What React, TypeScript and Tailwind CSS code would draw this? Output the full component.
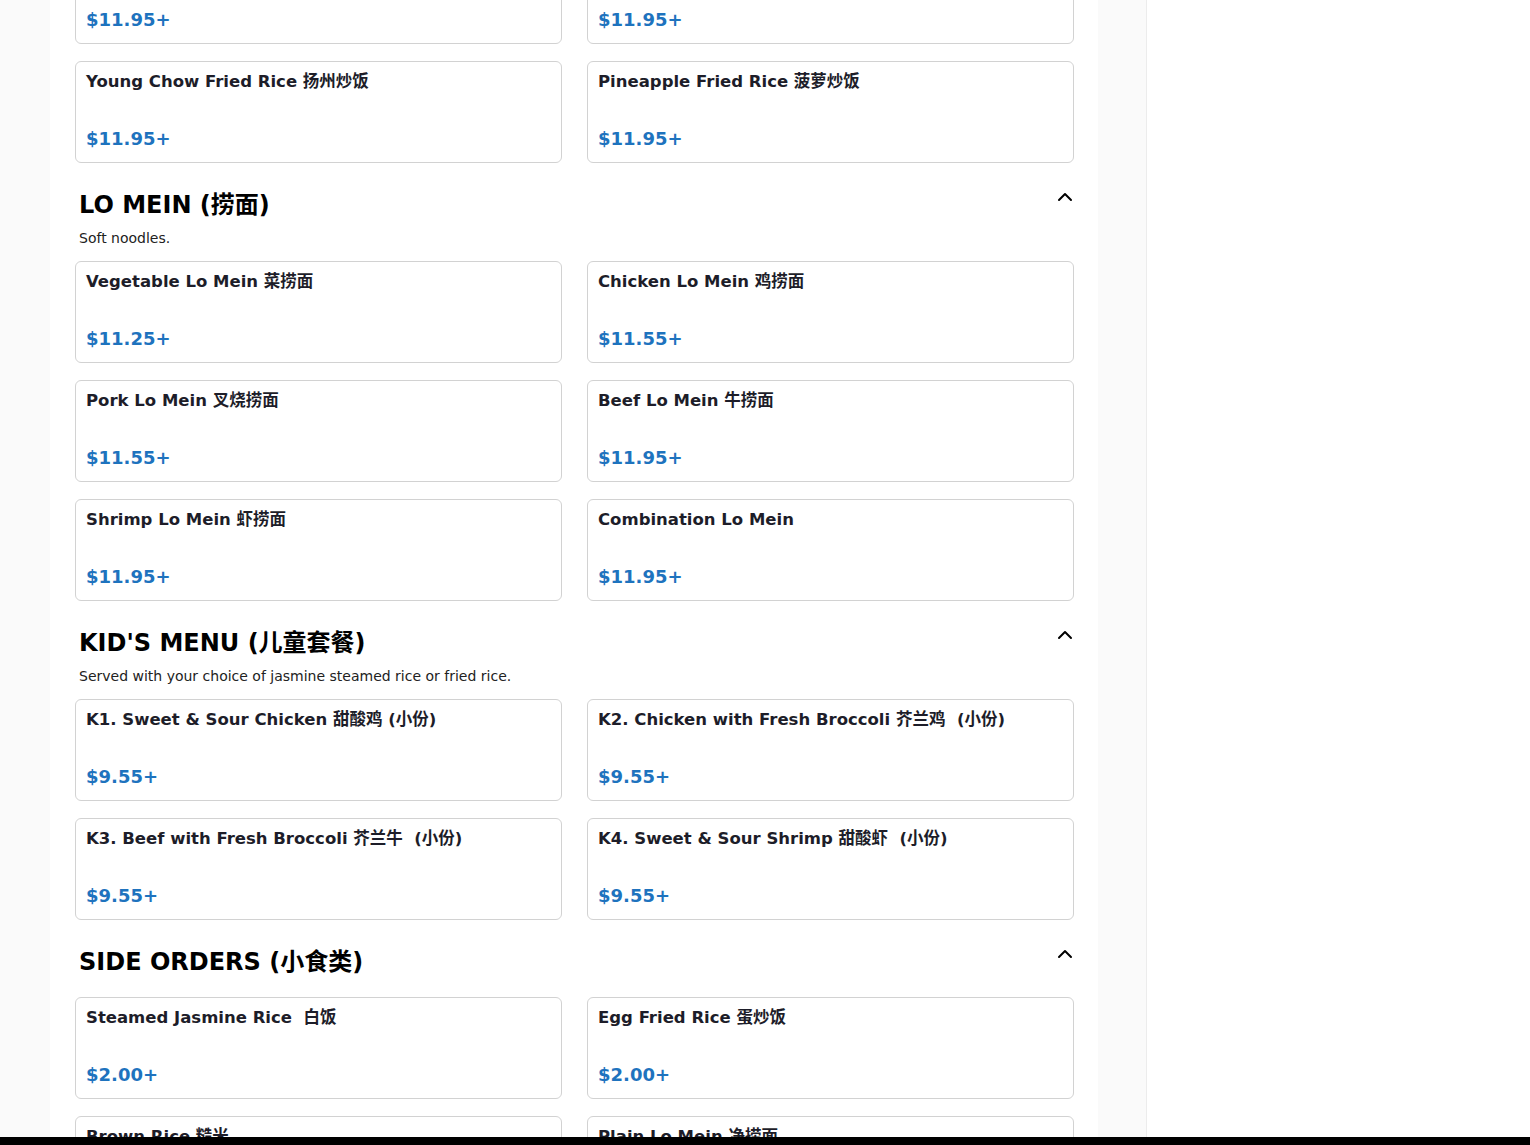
import { ChevronUp } from "lucide-react";

type Item = { name: string; price: string };
type Section = { title: string; note?: string; items: Item[] };

const topRow: Item[] = [
  { name: "Shrimp Fried Rice 虾炒饭", price: "$11.95+" },
  { name: "House Special Fried Rice 本楼炒饭", price: "$11.95+" },
  { name: "Young Chow Fried Rice 扬州炒饭", price: "$11.95+" },
  { name: "Pineapple Fried Rice 菠萝炒饭", price: "$11.95+" },
];

const sections: Section[] = [
  {
    title: "LO MEIN (捞面)",
    note: "Soft noodles.",
    items: [
      { name: "Vegetable Lo Mein 菜捞面", price: "$11.25+" },
      { name: "Chicken Lo Mein 鸡捞面", price: "$11.55+" },
      { name: "Pork Lo Mein 叉烧捞面", price: "$11.55+" },
      { name: "Beef Lo Mein 牛捞面", price: "$11.95+" },
      { name: "Shrimp Lo Mein 虾捞面", price: "$11.95+" },
      { name: "Combination Lo Mein", price: "$11.95+" },
    ],
  },
  {
    title: "KID'S MENU (儿童套餐)",
    note: "Served with your choice of jasmine steamed rice or fried rice.",
    items: [
      { name: "K1. Sweet & Sour Chicken 甜酸鸡 (小份)", price: "$9.55+" },
      { name: "K2. Chicken with Fresh Broccoli 芥兰鸡  (小份)", price: "$9.55+" },
      { name: "K3. Beef with Fresh Broccoli 芥兰牛  (小份)", price: "$9.55+" },
      { name: "K4. Sweet & Sour Shrimp 甜酸虾  (小份)", price: "$9.55+" },
    ],
  },
  {
    title: "SIDE ORDERS (小食类)",
    items: [
      { name: "Steamed Jasmine Rice  白饭", price: "$2.00+" },
      { name: "Egg Fried Rice 蛋炒饭", price: "$2.00+" },
      { name: "Brown Rice 糙米", price: "$2.00+" },
      { name: "Plain Lo Mein 净捞面", price: "$4.95+" },
    ],
  },
];

function ItemCard({ item }: { item: Item }) {
  return (
    <div className="h-[102px] rounded-md border border-[#d2d2d2] bg-white px-[10px] pt-[10px] pb-[10px] flex flex-col justify-between">
      <div className="text-[16.5px] leading-5 font-bold text-[#1d1d29] whitespace-pre-wrap">{item.name}</div>
      <div className="text-lg leading-[27px] font-bold text-[#1e73be]">{item.price}</div>
    </div>
  );
}

function Grid({ items }: { items: Item[] }) {
  return (
    <div className="grid grid-cols-2 gap-x-[25px] gap-y-[17px]">
      {items.map((it) => (
        <ItemCard key={it.name} item={it} />
      ))}
    </div>
  );
}

export default function App() {
  return (
    <div className="min-h-screen bg-[#fafafa] flex font-['DejaVu_Sans','Noto_Sans_CJK_SC',sans-serif]">
      <main className="ml-[50px] w-[1048px] shrink-0 bg-white pl-[25px] pr-[24px] pb-10">
        {/* scrolled part of the fried rice section */}
        <div className="-mt-[58px]">
          <Grid items={topRow} />
        </div>

        {sections.map((s) => (
          <section key={s.title} className="mt-[26px]">
            <div className={`flex items-start justify-between pl-1 ${s.note ? "" : "mb-[19px]"}`}>
              <h2 className="text-2xl leading-8 font-bold text-black">{s.title}</h2>
              <ChevronUp size={24} strokeWidth={2} className="-mt-1 -mr-[3px] text-black" />
            </div>
            {s.note && (
              <p className="mt-[7px] mb-[13px] pl-1 text-sm leading-5 text-[#222]">{s.note}</p>
            )}
            <Grid items={s.items} />
          </section>
        ))}
      </main>

      <aside className="ml-[48px] flex-1 bg-white border-l border-[#ececec]" />

      <div className="fixed bottom-0 left-0 right-0 h-2 bg-black" />
    </div>
  );
}
